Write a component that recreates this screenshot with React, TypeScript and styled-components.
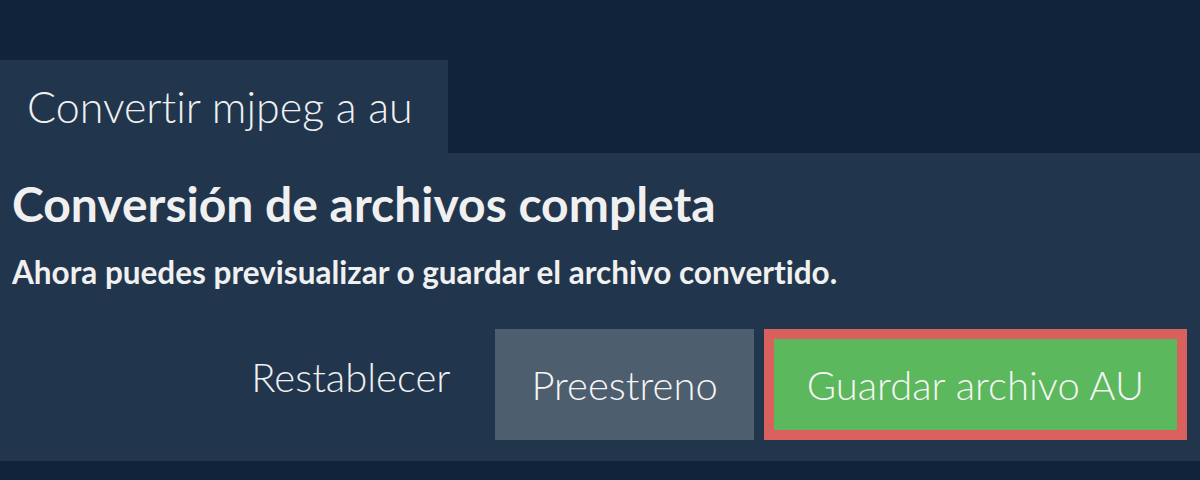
import styled, { createGlobalStyle } from "styled-components";

const GlobalStyle = createGlobalStyle`
  html, body {
    margin: 0;
    padding: 0;
    background: #10233a;
  }
  body {
    font-family: Lato, "Open Sans", sans-serif;
    font-variant-ligatures: no-common-ligatures;
    color: #f0f0f0;
  }
`;

function App() {
  return (
    <>
      <GlobalStyle />
      <Page>
        <Tab>Convertir mjpeg a au</Tab>
        <Panel>
          <Title>Conversión de archivos completa</Title>
          <Subtitle>
            Ahora puedes previsualizar o guardar el archivo convertido.
          </Subtitle>
          <Actions>
            <LinkButton>Restablecer</LinkButton>
            <Button>Preestreno</Button>
            <Button $primary>Guardar archivo AU</Button>
          </Actions>
        </Panel>
      </Page>
    </>
  );
}

export default App;

const Page = styled.div`
  padding-top: 60px;
  display: flex;
  flex-direction: column;
  align-items: flex-start;
`;

const Tab = styled.div`
  background: #21364d;
  font-size: 43px;
  font-weight: 300;
  line-height: 93px;
  height: 93px;
  width: 448px;
  box-sizing: border-box;
  padding-left: 27px;
  white-space: nowrap;
`;

const Panel = styled.div`
  align-self: stretch;
  background: #21364d;
  padding: 22px 13px 21px 12px;
`;

const Title = styled.h1`
  margin: 0;
  font-size: 48px;
  font-weight: 700;
  line-height: 1.2;
`;

const Subtitle = styled.p`
  margin: 21px 0 0;
  font-size: 31.5px;
  font-weight: 700;
  line-height: 1.2;
`;

const Actions = styled.div`
  margin-top: 38px;
  display: flex;
  justify-content: flex-end;
  align-items: center;
  gap: 10px;
`;

const LinkButton = styled.button`
  background: none;
  border: none;
  color: #f0f0f0;
  font-family: inherit;
  font-size: 40px;
  font-weight: 300;
  line-height: 1.2;
  padding: 0 35px 16px 0;
  cursor: pointer;
`;

const Button = styled.button<{ $primary?: boolean }>`
  height: 111px;
  box-sizing: border-box;
  background: ${(p) => (p.$primary ? "#5cb85c" : "#4d5e6e")};
  border: ${(p) => (p.$primary ? "10px solid #d9605c" : "none")};
  color: #f5f5f5;
  font-family: inherit;
  font-size: 40px;
  font-weight: 300;
  line-height: 1.2;
  padding: ${(p) => (p.$primary ? "0 33px" : "0 36px")};
  cursor: pointer;
`;
